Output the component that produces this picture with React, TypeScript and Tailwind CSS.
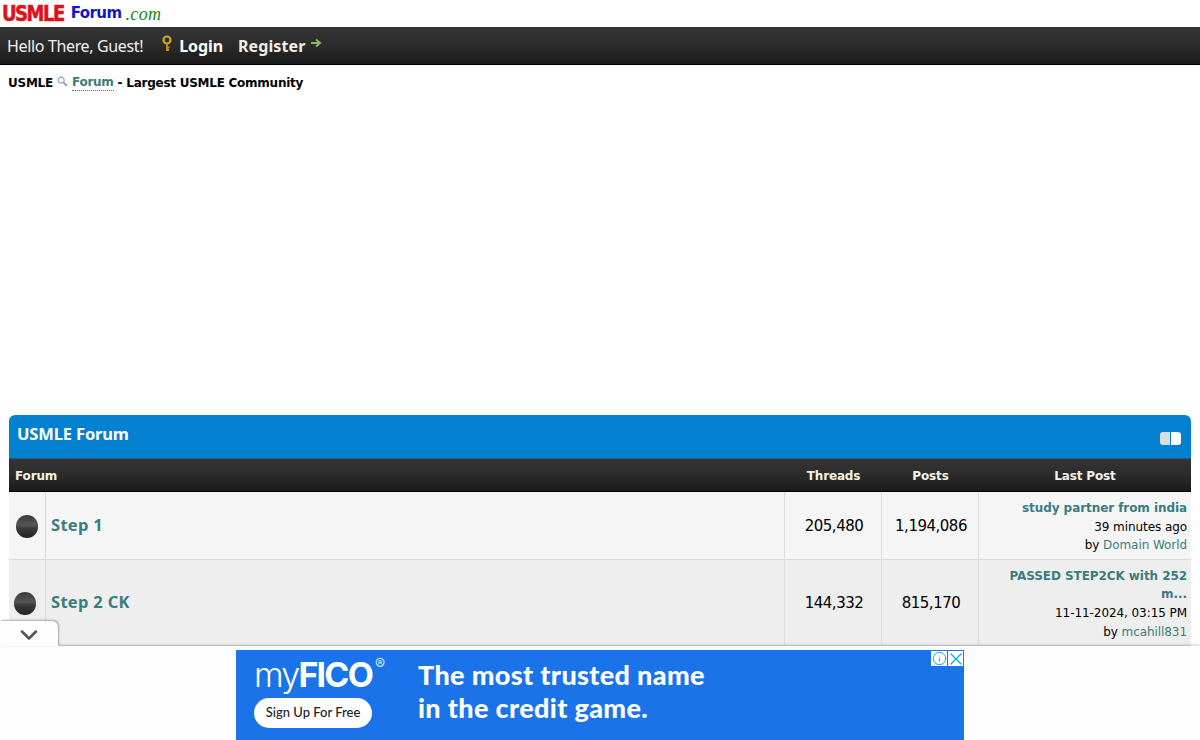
import { ChevronDown, X, Info } from "lucide-react";

const bodyFont = "font-['Noto_Sans',Tahoma,sans-serif]";

function Ball() {
  return (
    <div className="w-[22px] h-[23px] rounded-full bg-[linear-gradient(#3c3c3c_0%,#565656_45%,#3a3a3a_58%,#222_100%)]" />
  );
}

function ForumRow({
  name,
  threads,
  posts,
  title,
  date,
  user,
  bg,
  height,
  ballClass,
}: {
  name: string;
  threads: string;
  posts: string;
  title: string;
  date: string;
  user: string;
  bg: string;
  height: string;
  ballClass: string;
}) {
  return (
    <div className={`flex border-b border-[#dcdcdc] ${bg} ${height}`}>
      <div className={`w-[37px] shrink-0 border-r border-[#d8d8d8] flex items-center justify-center ${ballClass}`}>
        <Ball />
      </div>
      <div className="flex-1 border-r border-[#dcdcdc] flex items-center pl-[5px]">
        <a className="text-[16.5px] font-bold text-[#3b7c80] tracking-[0.3px]">{name}</a>
      </div>
      <div className="w-[97px] shrink-0 border-r border-[#dcdcdc] flex items-center justify-center pl-[2px] pt-[2px] font-['DejaVu_Sans',sans-serif] text-[15px] text-black tracking-[-0.5px]">
        {threads}
      </div>
      <div className="w-[97px] shrink-0 border-r border-[#dcdcdc] flex items-center justify-center pl-[2px] pt-[2px] font-['DejaVu_Sans',sans-serif] text-[15px] text-black tracking-[-0.5px]">
        {posts}
      </div>
      <div className="w-[212px] shrink-0 pr-1 pl-2 pt-[3px] flex flex-col justify-center text-right font-['DejaVu_Sans',sans-serif] text-[12px] leading-[18.7px] tracking-[-0.07px] text-black">
        <a className="font-bold text-[#3b7c80]">{title}</a>
        <span>{date}</span>
        <span>
          by <a className="text-[#3b7c80]">{user}</a>
        </span>
      </div>
    </div>
  );
}

export default function App() {
  return (
    <div className={`relative h-[740px] w-[1200px] overflow-hidden bg-white ${bodyFont}`}>
      <div className="h-[27px] flex items-center pl-[2px] leading-none whitespace-nowrap">
        <span className="font-['DejaVu_Sans',sans-serif] font-bold text-[18px] text-[#e0101a] tracking-[-1.5px] scale-y-[1.15] [-webkit-text-stroke:0.5px_#e0101a]">USMLE</span>
        <span className="font-['DejaVu_Sans',sans-serif] font-bold text-[15px] text-[#1414c8] ml-[7px] tracking-[-0.6px]">Forum</span>
        <span className="font-['Liberation_Serif',serif] italic text-[18px] text-[#138a13] ml-[4px] tracking-[0.4px]">.com</span>
      </div>

      <div className="h-[38px] flex items-center bg-[linear-gradient(#353535_0%,#2b2b2b_50%,#1a1a1a_100%)] border-b border-black pl-[7px] text-white">
        <span className="text-[16px] tracking-[-0.35px] text-[#f0f0f0]">Hello There, Guest!</span>
        <svg width="12" height="18" viewBox="0 0 12 18" className="ml-[18px] mb-1">
          <circle cx="6" cy="5" r="3.5" fill="none" stroke="#d9a520" strokeWidth="2.2" />
          <path d="M6 8v8M6 12.5h2.5M6 15h2" stroke="#c8941a" strokeWidth="1.8" fill="none" />
        </svg>
        <a className="ml-[6px] font-bold text-[16px] tracking-[-0.1px]">Login</a>
        <a className="ml-[15px] font-bold text-[16px] tracking-[0.1px] text-[#f2efe6]">Register</a>
        <svg width="12" height="10" viewBox="0 0 12 10" className="ml-[5px] mb-1.5">
          <path d="M1 5h8M6 1.5 10 5 6 8.5" stroke="#7fbf5a" strokeWidth="2" fill="none" />
        </svg>
      </div>

      <div className="h-[35px] flex items-center pl-2 text-[12px] font-bold text-black font-['DejaVu_Sans',sans-serif] tracking-[-0.25px] whitespace-nowrap">
        <span>USMLE</span>
        <svg width="11" height="11" viewBox="0 0 11 11" className="mx-[4px] mb-[2px]">
          <circle cx="4.2" cy="4.2" r="3" fill="none" stroke="#7fa8b8" strokeWidth="1.2" />
          <path d="M6.5 6.5 10 10" stroke="#6a8fa0" strokeWidth="1.4" />
        </svg>
        <a className="text-[#3b7c80] border-b border-dotted border-[#3b7c80] leading-[15px]">Forum</a>
        <span className="ml-1">- Largest USMLE Community</span>
      </div>

      <div className="h-[315px]" />

      <div className="mx-[9px]">
        <div className="h-[44px] rounded-t-[6px] bg-[#0480d1] flex items-center justify-between pl-2 pr-[10px] border-b border-[#2a5a78]">
          <span className="font-bold text-[16.5px] text-white mb-[5px] tracking-[-0.15px]">USMLE Forum</span>
          <div className="flex mt-[3px] gap-px">
            <span className="w-[10px] h-[13px] rounded-l-[3px] bg-[#d8dde0]" />
            <span className="w-[10px] h-[13px] rounded-r-[3px] bg-white" />
          </div>
        </div>
        <div className="h-[33px] flex items-center bg-[linear-gradient(#353535_0%,#2b2b2b_50%,#1a1a1a_100%)] border-b border-black text-[12px] font-bold text-[#f4f1e6] font-['DejaVu_Sans',sans-serif] tracking-[-0.15px] pt-[2px]">
          <span className="flex-1 pl-[6px]">Forum</span>
          <span className="w-[97px] text-center">Threads</span>
          <span className="w-[97px] text-center">Posts</span>
          <span className="w-[212px] text-center">Last Post</span>
        </div>
        <ForumRow
          name="Step 1"
          threads="205,480"
          posts="1,194,086"
          title="study partner from india"
          date="39 minutes ago"
          user="Domain World"
          bg="bg-[#f5f5f5]"
          height="h-[68px]"
          ballClass="pt-px"
        />
        <ForumRow
          name="Step 2 CK"
          threads="144,332"
          posts="815,170"
          title="PASSED STEP2CK with 252 m..."
          date="11-11-2024, 03:15 PM"
          user="mcahill831"
          bg="bg-[#eeeeee]"
          height="h-[86px]"
          ballClass="pr-[4px] pt-[2px]"
        />
      </div>

      {/* anchored ad */}
      <div className="absolute left-0 right-0 bottom-0 h-[94px] bg-[#fdfdfd] shadow-[0_-1px_3px_rgba(0,0,0,0.2)] flex justify-center items-end">
        <div className="absolute left-0 -top-[25px] w-[58px] h-[25px] bg-[#fdfdfd] rounded-tr-[6px] shadow-[1px_-1px_2px_rgba(0,0,0,0.3)] flex items-center justify-center pt-[3px]">
          <ChevronDown className="w-7 h-7 text-[#555]" strokeWidth={2.2} />
        </div>
        <div className="relative w-[728px] h-[90px] bg-[#1a73e8] flex font-['Inter',sans-serif] text-white">
          <div className="w-[136px] ml-[18px] mt-[5px] flex flex-col items-start">
            <div className="flex items-start leading-none h-[39px]">
              <span className="text-[34px] font-light tracking-[-1.8px] mt-[3px]">my</span>
              <span className="text-[34px] font-bold tracking-[-1.8px] mt-[3px]">FICO</span>
              <span className="text-[15px] font-light ml-[3px] mt-[1px]">®</span>
            </div>
            <div className="mt-[4px] w-[118px] h-[30px] rounded-full bg-white text-[#222] text-[13px] font-medium flex items-center justify-center whitespace-nowrap font-['Lato',sans-serif]">
              Sign Up For Free
            </div>
          </div>
          <div className="ml-[28px] mt-[8px] font-['Lato',sans-serif] text-[27px] font-black leading-[33px] tracking-[0.35px] whitespace-nowrap">
            <div>The most trusted name</div>
            <div>in the credit game.</div>
          </div>
          <div className="absolute top-[1px] right-[1px] flex">
            <span className="w-[16px] h-[15px] bg-white flex items-center justify-center">
              <Info className="w-[15px] h-[15px] shrink-0 text-[#00aecd]" strokeWidth={1.5} />
            </span>
            <span className="w-[15px] h-[15px] bg-white ml-px flex items-center justify-center overflow-hidden">
              <X className="w-[20px] h-[20px] shrink-0 text-[#00aecd]" strokeWidth={1.5} />
            </span>
          </div>
        </div>
      </div>
    </div>
  );
}
